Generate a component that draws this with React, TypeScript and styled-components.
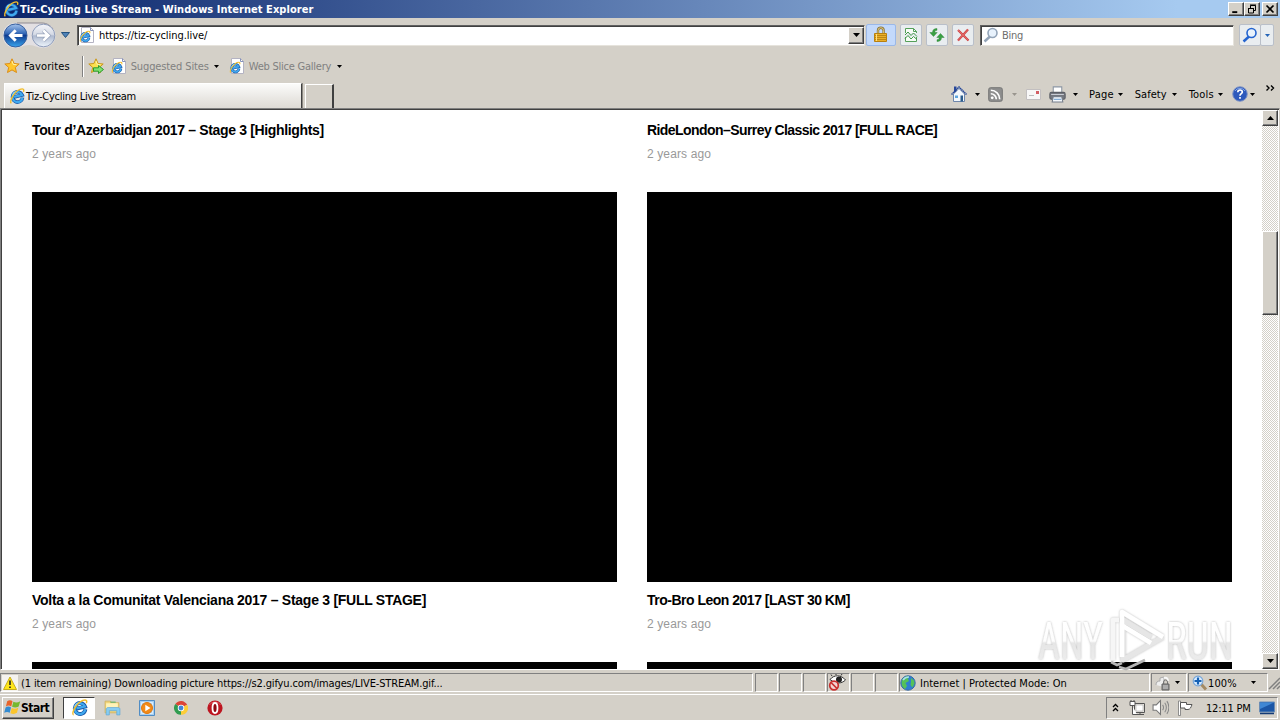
import type { ReactNode } from 'react';
import styled, { createGlobalStyle, css } from 'styled-components';

const GlobalStyle = createGlobalStyle`
  * { box-sizing: border-box; }
  body {
    margin: 0;
    overflow: hidden;
    background: #d4d0c8;
    font-family: "DejaVu Sans Condensed", "DejaVu Sans", sans-serif;
    font-stretch: condensed;
    font-size: 11px;
    color: #000;
  }
  svg { display: block; flex: none; }
`;

const raised = css`
  background: #d4d0c8;
  border: 1px solid;
  border-color: #fff #404040 #404040 #fff;
  box-shadow: inset -1px -1px 0 #808080;
`;

const sunken = css`
  border: 1px solid;
  border-color: #808080 #fff #fff #808080;
`;

const Screen = styled.div`
  width: 1280px;
  height: 720px;
  display: flex;
  flex-direction: column;
  overflow: hidden;
`;

const Label = styled.span<{ $ls?: number; $ml?: number; $color?: string }>`
  white-space: pre;
  line-height: 14px;
  margin-top: 2px;
  letter-spacing: ${p => p.$ls ?? -0.3}px;
  margin-left: ${p => p.$ml ?? 0}px;
  color: ${p => p.$color ?? '#000'};
`;

const Slot = styled.span<{ $ml?: number; $mt?: number }>`
  flex: none;
  display: block;
  margin-left: ${p => p.$ml ?? 0}px;
  margin-top: ${p => p.$mt ?? 0}px;
`;

const TitleBar = styled.div`
  height: 18px;
  flex: none;
  display: flex;
  align-items: center;
  padding: 0 2px 0 3px;
  background: linear-gradient(90deg, #0a246a, #a6caf0 92%);
`;

const TitleText = styled.span`
  flex: 1;
  margin-left: 1px;
  color: #fff;
  font-weight: bold;
  letter-spacing: 0.04px;
  white-space: pre;
`;

const WindowButton = styled.div<{ $ml?: number }>`
  ${raised}
  width: 16px;
  height: 14px;
  margin-left: ${p => p.$ml ?? 0}px;
  display: flex;
  align-items: center;
  justify-content: center;
`;

const AddressRow = styled.div`
  height: 34px;
  flex: none;
  display: flex;
  align-items: center;
  padding-left: 3px;
`;

const Field = styled.div<{ $w: number; $ml: number }>`
  width: ${p => p.$w}px;
  height: 21px;
  margin-left: ${p => p.$ml}px;
  display: flex;
  align-items: center;
  background: #fff;
  border: 1px solid;
  border-color: #606060 #e6e3dc #e6e3dc #606060;
  box-shadow: inset 1px 1px 0 #404040;
  padding-left: 1px;
`;

const ComboButton = styled.div`
  ${raised}
  width: 16px;
  height: 17px;
  margin-left: auto;
  display: flex;
  align-items: center;
  justify-content: center;
`;

const ToolButton = styled.div<{ $w?: number; $ml?: number; $active?: boolean }>`
  width: ${p => p.$w ?? 22}px;
  height: 22px;
  margin-left: ${p => p.$ml ?? 4}px;
  display: flex;
  align-items: center;
  justify-content: center;
  border: 1px solid ${p => (p.$active ? '#9ab8e8' : '#b9bfc9')};
  border-radius: 2px;
  background: ${p => (p.$active ? '#c3d9fb' : '#e9edf0')};
`;

const FavoritesRow = styled.div`
  height: 28px;
  flex: none;
  display: flex;
  align-items: center;
  padding-left: 4px;
`;

const Divider = styled.div`
  width: 2px;
  height: 21px;
  margin-left: 12px;
  border-left: 1px solid #808080;
  border-right: 1px solid #fff;
`;

const TabRow = styled.div`
  height: 28px;
  flex: none;
  display: flex;
  align-items: center;
  padding-left: 4px;
`;

const Tab = styled.div`
  width: 298px;
  height: 25px;
  margin-top: 3px;
  display: flex;
  align-items: center;
  padding-left: 4px;
  background: linear-gradient(#fbfbfa, #e9e7e3 60%, #dedbd5);
  border-top: 1px solid #fff;
  border-left: 1px solid #fff;
  border-right: 1px solid #404040;
  box-shadow: 1px 0 0 #8a8781;
`;

const NewTab = styled.div`
  width: 29px;
  height: 24px;
  margin: 4px 0 0 3px;
  border-top: 1px solid #fff;
  border-left: 1px solid #fff;
  border-right: 2px solid #404040;
`;

const Commands = styled.div`
  flex: 1;
  height: 28px;
  display: flex;
  align-items: center;
  margin-left: 617px;
`;

const Viewport = styled.div`
  height: 562px;
  flex: none;
  display: flex;
  background: #fff;
  border: 1px solid;
  border-color: #808080 #d4d0c8 #fff #808080;
  box-shadow: inset 1px 1px 0 #404040;
  position: relative;
`;

const Page = styled.div`
  flex: 1;
  display: grid;
  grid-template-columns: 585px 585px;
  column-gap: 30px;
  align-content: start;
  padding-left: 31px;
  padding-top: 12px;
  overflow: hidden;
  font-family: "Liberation Sans", Arial, sans-serif;
`;

const VideoTitle = styled.h3<{ $ls: number }>`
  margin: 0;
  height: 18px;
  font-size: 14px;
  line-height: 18px;
  font-weight: bold;
  letter-spacing: ${p => p.$ls}px;
  white-space: pre;
`;

const Age = styled.p`
  margin: 6px 0 0;
  height: 18px;
  font-size: 12px;
  line-height: 18px;
  letter-spacing: 0.12px;
  color: #999;
`;

const Thumb = styled.div`
  height: 390px;
  margin: 29px 0 9px;
  background: #000;
`;

const ScrollBar = styled.div`
  width: 16px;
  flex: none;
  margin: 1px 1px 0 0;
  display: flex;
  flex-direction: column;
  background: repeating-conic-gradient(#fff 0 25%, #d4d0c8 0 50%) 0 0 / 2px 2px;
`;

const ScrollButton = styled.div`
  ${raised}
  height: 16px;
  display: flex;
  align-items: center;
  justify-content: center;
`;

const ScrollThumb = styled.div`
  ${raised}
  height: 84px;
  margin: 105px 0 auto;
`;

const Watermark = styled.div`
  position: absolute;
  left: 1034px;
  top: 496px;
`;

const StatusBar = styled.div`
  height: 24px;
  flex: none;
  display: flex;
  align-items: center;
  padding-top: 1px;
`;

const StatusCell = styled.div<{ $w: number; $ml?: number }>`
  ${sunken}
  width: ${p => p.$w}px;
  height: 19px;
  margin-left: ${p => p.$ml ?? 1}px;
  display: flex;
  align-items: center;
  flex: none;
`;

const TaskBar = styled.div`
  flex: 1;
  display: flex;
  align-items: center;
  border-top: 1px solid #fff;
  padding: 0 2px 0 2px;
`;

const StartButton = styled.div`
  ${raised}
  width: 52px;
  height: 22px;
  display: flex;
  align-items: center;
  padding-left: 1px;
  font-size: 12px;
  font-weight: bold;
  letter-spacing: -0.5px;
`;

const ActiveTask = styled.div`
  width: 32px;
  height: 22px;
  margin-left: 9px;
  display: flex;
  align-items: center;
  justify-content: center;
  background: #fff;
  border: 1px solid;
  border-color: #404040 #fff #fff #404040;
`;

const Tray = styled.div`
  ${sunken}
  width: 172px;
  height: 22px;
  margin-left: auto;
  display: flex;
  align-items: center;
  padding-left: 5px;
`;

const Svg = ({ w = 16, h = w, box, children }: { w?: number; h?: number; box?: string; children: ReactNode }) => (
  <svg width={w} height={h} viewBox={box ?? '0 0 16 16'} fill="none">{children}</svg>
);

const Down = ({ w = 5, color = '#000' }: { w?: number; color?: string }) => (
  <svg width={w} height={(w + 1) / 2} viewBox="0 0 10 6" preserveAspectRatio="none">
    <path d="M0 0H10L5 6Z" fill={color} />
  </svg>
);

const IeMark = () => (
  <>
    <g transform="rotate(-14 8 8)">
      <path d="M13 10.900a5 5.200 0 1 1 .3-2.500H5" stroke="#1c5aa8" strokeWidth="3.600" />
      <path d="M12.900 10.800a5 5.100 0 1 1 .2-2.600H5" stroke="#3fa9ef" strokeWidth="2.200" />
      <path d="M4 6.500a4.500 4 0 0 1 5-2.800" stroke="#8cd4fb" strokeWidth="1.200" />
    </g>
    <path d="M2.400 15C-.6 13.800 6.500 1 13.300.9c1.800 0 1.700 1.600 1.100 3" stroke="#f2bd2c" strokeWidth="1.400" />
  </>
);

const IeIcon = ({ size = 16 }: { size?: number }) => <Svg w={size}><IeMark /></Svg>;

const IePage = () => (
  <Svg>
    <path d="M2.500.5h9l3 3v12h-12z" fill="#fff" stroke="#b4b3c2" />
    <path d="M11.500.5v3h3" stroke="#8492bb" />
    <g transform="translate(0 3.500) scale(.74)"><IeMark /></g>
  </Svg>
);

const NavIcon = () => (
  <Svg w={54} h={27} box="0 0 54 27">
    <defs>
      <linearGradient id="back" x2="0" y2="1">
        <stop stopColor="#a6c4ec" /><stop offset=".4" stopColor="#376cba" /><stop offset=".5" stopColor="#0f3c90" /><stop offset="1" stopColor="#39a5ee" />
      </linearGradient>
      <linearGradient id="fwd" x2="0" y2="1">
        <stop stopColor="#f4f5fa" /><stop offset=".45" stopColor="#d5dae5" /><stop offset=".52" stopColor="#aeb9cf" /><stop offset="1" stopColor="#eef5fc" />
      </linearGradient>
    </defs>
    <path d="M12 1h28a12 12 0 0 1 0 25c-6 0-8-3-14-3s-8 3-14 3a12 12 0 0 1 0-25" fill="#e2dfe2" />
    <path d="M14 1h25c5 0 9 3 11 6" stroke="#8e8a92" />
    <circle cx="12.500" cy="13.500" r="11.500" fill="url(#back)" stroke="#37609f" />
    <circle cx="40.500" cy="13.500" r="11.300" fill="url(#fwd)" stroke="#8f9dba" />
    <path d="M19.500 13.500H8M12.700 8.300l-5.200 5.200 5.200 5.200" stroke="#fff" strokeWidth="3" />
    <path d="M33.500 13.500H45M40.300 8.300l5.200 5.200-5.200 5.200" stroke="#97a3ba" strokeWidth="4" />
    <path d="M34 13.500h11M40.300 8.300l5.200 5.200-5.200 5.200" stroke="#fff" strokeWidth="2.600" />
  </Svg>
);

const star = 'M8 .8l2.1 4.7 5.1.5-3.9 3.4 1.2 5.1L8 11.9l-4.5 2.6 1.2-5.1L.8 6l5.1-.5z';

const StarIcon = ({ add }: { add?: boolean }) => (
  <Svg>
    <path d={star} fill={add ? '#fbe04f' : '#ffc62c'} stroke={add ? '#c9971d' : '#dc8d17'} />
    <path d="M8 3l1.200 3.400 3.400.3" stroke="#fff3a5" />
    {add && <path d="M5.500 9.800h5V7.500l5 4-5 4v-2.300h-5z" fill="#7fe070" stroke="#2c9a2d" />}
  </Svg>
);

const LockIcon = () => (
  <Svg w={18} h={18} box="0 0 18 18">
    <path d="M6 8V4.500a2.800 2.800 0 0 1 5.600 0V8" stroke="#8b7439" strokeWidth="2.400" />
    <path d="M6 8V4.500a2.800 2.800 0 0 1 5.600 0V8" stroke="#e5d28a" strokeWidth=".9" />
    <path d="M2.500 7.500h12v8h-12z" fill="#eab02a" stroke="#b8800f" />
    <path d="M3 9.500h11M3 11.500h11M3 13.500h11" stroke="#bd8613" />
    <path d="M4.500 8v7" stroke="#ffe081" />
  </Svg>
);

const CompatIcon = () => (
  <Svg>
    <path d="M2.500 6V1.500h8l3 3V6M2.500 10v4.500h11V10" stroke="#55a05a" fill="#f7fcf7" />
    <path d="M10.500 1.500v3h3" stroke="#55a05a" />
    <path d="M2 8l3-3 3 3.500L10.500 6 14 9.500M2 11.500l3-3 3 3.500 2.500-2.500 3.500 3" stroke="#3f9846" />
  </Svg>
);

const RefreshIcon = () => (
  <Svg>
    <path d="M8 1.500C5 1.500 3.500 3 3.500 5.500H.8L4.500 9.500 8.200 5.500H5.800C5.800 4 6.500 3.300 8 3.300z" fill="#3aa043" stroke="#1e7c2a" strokeWidth=".4" />
    <path d="M8 14.500c3 0 4.500-1.500 4.500-4h2.700l-3.700-4-3.700 4h2.400c0 1.500-.7 2.200-2.200 2.200z" fill="#3aa043" stroke="#1e7c2a" strokeWidth=".4" />
  </Svg>
);

const StopIcon = () => (
  <Svg>
    <path d="M3 3l10.500 10.500M13 2.500L3 13.500" stroke="#cf4545" strokeWidth="2.200" />
    <path d="M3 3l10.500 10.500M13 2.500L3 13.500" stroke="#eb7777" strokeWidth=".7" />
  </Svg>
);

const SearchIcon = ({ color }: { color: string }) => (
  <Svg>
    <path d="M7 9.500L1.500 14.500" stroke={color} strokeWidth="2.500" />
    <circle cx="9.500" cy="6" r="4.500" fill="#e8f2fc" stroke={color} strokeWidth="1.600" />
  </Svg>
);

const ZoomIcon = () => (
  <Svg>
    <path d="M9 9l5 5.500" stroke="#a48a64" strokeWidth="3" />
    <circle cx="6" cy="6" r="4.800" fill="#d9ecff" stroke="#79a6d8" strokeWidth="1.200" />
    <path d="M2.500 6h7M6 2.500v7" stroke="#1762b5" strokeWidth="2.200" />
  </Svg>
);

const HomeIcon = () => (
  <Svg>
    <path d="M2.500 8v7.500h11V8L8 2.500z" fill="#f3f8fd" stroke="#6e86ab" />
    <path d="M3 .5h2.500V5L3 7z" fill="#27479a" />
    <path d="M.5 8.500L8 1l7.500 7.500" stroke="#24479b" strokeWidth="1.500" strokeDasharray="1.500 .5" />
    <path d="M4 9.500h3v2.500H4z" fill="#5fa7df" /><path d="M9.500 9.500H12v6H9.500z" fill="#2b5c8d" />
  </Svg>
);

const RssIcon = () => (
  <Svg w={15}>
    <rect x=".7" y=".7" width="14.600" height="14.600" rx="2" fill="#8e8e8e" stroke="#737373" />
    <circle cx="4.500" cy="11.500" r="1.500" fill="#fff" />
    <path d="M3 7.200a5.800 5.800 0 0 1 5.800 5.800M3 3.500a9.500 9.500 0 0 1 9.500 9.500" stroke="#fff" strokeWidth="1.700" />
  </Svg>
);

const MailIcon = () => (
  <Svg w={15} h={11} box="0 0 15 11">
    <path d="M.5.5h14v10H.5z" fill="#f8f7f7" stroke="#c2bfc0" />
    <path d="M10 2h3v3h-3z" fill="#d35d63" /><path d="M3 6.500h5" stroke="#bbb" />
  </Svg>
);

const PrinterIcon = () => (
  <Svg w={17}>
    <path d="M4 .8h8V7H4z" fill="#fff" stroke="#8c96a4" />
    <rect x=".8" y="6" width="14.400" height="6.500" rx="1.500" fill="#74777e" stroke="#5c5f66" />
    <path d="M2 8h12" stroke="#c8ccd4" /><path d="M4 10h8l1 5H3z" fill="#f5f9fd" stroke="#777f8b" />
    <path d="M4.500 12.500h7" stroke="#6c9dcc" />
  </Svg>
);

const HelpIcon = () => (
  <Svg>
    <circle cx="8" cy="8" r="7.300" fill="#2d59bc" stroke="#8396c4" />
    <path d="M3 5a6 6 0 0 1 10 0" stroke="#86a9e8" />
    <path d="M5.800 6.300c0-3.300 4.800-2.800 4.500-.2C10.200 7.700 8 7.700 8 9.700M8 11v1.700" stroke="#fff" strokeWidth="1.700" />
  </Svg>
);

const WarnIcon = () => (
  <Svg>
    <path d="M0 0h16v16H0z" fill="#f5f3ef" />
    <path d="M8 2L14.500 14.500h-13z" fill="#ffe619" stroke="#c9ad1c" strokeLinejoin="round" />
    <path d="M8 5.500V10M8 11.500V13" stroke="#222" strokeWidth="1.600" />
  </Svg>
);

const EyeIcon = () => (
  <Svg w={19} h={17} box="0 0 19 17">
    <path d="M2 5.500C6 .5 13 .5 17.500 6c-4 4-10 4-15.500-.5z" fill="#fff" stroke="#333" />
    <circle cx="11" cy="5.500" r="3" fill="#222" />
    <path d="M4 2L3 .5M8 1V0M13 1.500l1-1.500" stroke="#333" />
    <circle cx="6" cy="11.500" r="4.300" fill="#f3d5d5" stroke="#c9302f" strokeWidth="1.700" />
    <path d="M3 8.500l6 6" stroke="#c9302f" strokeWidth="1.700" />
  </Svg>
);

const GlobeIcon = () => (
  <Svg>
    <circle cx="8" cy="8" r="7.200" fill="#2f7fd0" stroke="#3a6aa5" />
    <path d="M3 3.500c2-2 4-2.500 6-2L8 4 9 6 5.500 8 7 11l-2 3C1.500 12 .5 7 3 3.500zM11 3l3 2.500.5 3-2 4-2-2.500.5-3z" fill="#55c258" />
    <path d="M3 5a7 7 0 0 1 6-3" stroke="#a9dfef" strokeWidth="1.500" />
  </Svg>
);

const ShieldLock = () => (
  <Svg>
    <path d="M1 10c0-3 1.500-4 4-4V3l4-1v10" fill="#eee" stroke="#aaa" />
    <path d="M9 3c3-1 4 1 4 3" stroke="#f8f8f8" strokeWidth="2" />
    <path d="M8.500 9V7a2 2 0 0 1 4 0v2" stroke="#777" /><path d="M7 9h7v6H7z" fill="#8d8d8d" stroke="#666" /><path d="M8 11h5M8 13h5" stroke="#ccc" />
  </Svg>
);

const StartFlag = () => (
  <Svg w={17}>
    <path d="M3 2C5 .8 6.500 1 8 2L6.800 7C5 5.800 3.600 6 1.800 7z" fill="#e86329" />
    <path d="M8.800 2.500c2 1 4 1 6.500-.5L13.800 7c-2 1.300-4 1.300-6.200.3z" fill="#76b82f" />
    <path d="M1.500 8C3.300 6.800 5 7 6.600 8L5.400 13C3.500 12 2 12.200.2 13z" fill="#338bd1" />
    <path d="M7.300 8.400c2 1 4 1 6.200-.4l-1.300 5c-2 1.300-4 1.300-6.200.3z" fill="#fbc52c" />
  </Svg>
);

const ExplorerIcon = () => (
  <Svg w={17}>
    <path d="M1 2h5l1 1.500h7V13H1z" fill="#f0d47a" stroke="#cfae58" strokeWidth=".7" />
    <path d="M2 4h11v5H2z" fill="#fff3b8" /><path d="M6 3h5" stroke="#6fb76c" strokeWidth="1.200" />
    <path d="M2 15V9.500c0-1 1-1.500 2-1.500h9c1 0 2 .5 2 1.500V15h-3v-4H5v4z" fill="#86ccf2" stroke="#5ba3d4" strokeWidth=".6" />
  </Svg>
);

const PlayerIcon = () => (
  <Svg>
    <path d="M.5.5h15v15H.5z" fill="#a7cff1" stroke="#518dc4" />
    <path d="M2.500 2.500h11v11h-11z" stroke="#dceefc" />
    <circle cx="8" cy="8" r="5.500" fill="#f28a17" stroke="#e0780d" /><path d="M6.300 4.800v6.400L11.500 8z" fill="#fff" />
  </Svg>
);

const ChromeIcon = () => (
  <Svg w={14}>
    <path d="M8 8L1.500 3.500A8 8 0 0 1 15 4.200z" fill="#dc4436" />
    <path d="M8 8l7-3.800A7.600 7.600 0 0 1 8 15.700z" fill="#fccd37" />
    <path d="M8 8v7.700A7.700 7.700 0 0 1 1.500 3.500z" fill="#319c50" />
    <circle cx="8" cy="8" r="3.700" fill="#fff" /><circle cx="8" cy="8" r="2.800" fill="#4285d6" />
  </Svg>
);

const OperaIcon = () => (
  <Svg>
    <circle cx="8" cy="8" r="7.600" fill="#bd1520" /><path d="M2.500 5a6.500 6.500 0 0 1 11 0" stroke="#e0555d" />
    <ellipse cx="8" cy="8" rx="2.500" ry="5" fill="#8e0710" stroke="#fff" strokeWidth="1.800" />
  </Svg>
);

const NetworkIcon = () => (
  <Svg>
    <path d="M5.500 3.500h10v9h-10z" fill="#e7e5e0" stroke="#555" /><path d="M7 5h7v6H7z" fill="#fff" stroke="#999" strokeWidth=".5" />
    <path d="M7 14.500h8M11 13v1" stroke="#555" /><path d="M1 1.500h5v4H1zM2 1V0M5 1V0M3.500 6v8.500H8" stroke="#555" fill="#fff" />
  </Svg>
);

const SpeakerIcon = () => (
  <Svg w={17}>
    <path d="M1 5.500h3l4-4v13l-4-4H1z" fill="#fff" stroke="#777" />
    <path d="M10 5.500c1 1.500 1 3.500 0 5M12 3.500c2 2.500 2 6.500 0 9M14 2c2.500 3.500 2.500 8.500 0 12" stroke="#888" />
  </Svg>
);

const FlagIcon = () => (
  <Svg>
    <path d="M1.500 1h2v14.500h-2z" fill="#fff" stroke="#777" strokeWidth=".8" />
    <path d="M3.500 2.500h6v2H15c-1 3-2 5-4 5H8v-1.500H3.500z" fill="#fff" stroke="#555" />
  </Svg>
);

const DesktopIcon = () => (
  <Svg w={16} h={14} box="0 0 16 14">
    <path d="M.5 1h15v10H.5z" fill="#1b56a6" stroke="#6a8cb5" />
    <path d="M1 1.500h14L1 8z" fill="#3f87d4" /><path d="M1 12.500h14" stroke="#133a75" strokeWidth="1.500" />
  </Svg>
);

const MarkText = styled.text`
  font-family: Roboto, "Liberation Sans", sans-serif;
  font-size: 51px;
  font-weight: 400;
`;

const AnyRun = () => (
  <svg width="214" height="74" viewBox="0 0 214 74">
    <defs>
      <linearGradient id="wm" gradientUnits="userSpaceOnUse" x1="0" y1="16" x2="0" y2="56">
        <stop stopColor="#fff" /><stop offset=".5" stopColor="#fdfdfd" /><stop offset=".55" stopColor="#e6e6e6" /><stop offset="1" stopColor="#ececec" />
      </linearGradient>
      <filter id="halo" x="-10%" y="-10%" width="120%" height="120%">
        <feDropShadow dx="0" dy="0" stdDeviation="1.300" floodColor="#808080" floodOpacity=".6" />
      </filter>
    </defs>
    <g fill="url(#wm)" filter="url(#halo)">
      <MarkText x="3" y="54" textLength="65" lengthAdjust="spacingAndGlyphs">ANY</MarkText>
      <MarkText x="131" y="54" textLength="67" lengthAdjust="spacingAndGlyphs">RUN</MarkText>
    </g>
    <g fill="none" strokeLinejoin="round" filter="url(#halo)">
      <path d="M84 15h-6v40" stroke="#f6f6f6" strokeWidth="4.500" />
      <path d="M128 32L88 55V15l28 17" stroke="#e6e6e6" strokeWidth="5" />
      <path d="M87 52V7l41 25M88 21l28 17" stroke="#fff" strokeWidth="4.500" />
    </g>
    <path d="M76 57l6 3 5-2M84 62l7 2 19-9" fill="none" stroke="#b5b5b5" strokeWidth="2.800" />
  </svg>
);

const videos = [
  { title: 'Tour d’Azerbaidjan 2017 – Stage 3 [Highlights]', ls: -0.35 },
  { title: 'RideLondon–Surrey Classic 2017 [FULL RACE]', ls: -0.57 },
  { title: 'Volta a la Comunitat Valenciana 2017 – Stage 3 [FULL STAGE]', ls: -0.27 },
  { title: 'Tro-Bro Leon 2017 [LAST 30 KM]', ls: -0.5 },
];

const App = () => {
  return (
    <Screen>
      <GlobalStyle />
      <TitleBar>
        <IeIcon />
        <TitleText>Tiz-Cycling Live Stream - Windows Internet Explorer</TitleText>
        <WindowButton>
          <Svg w={10}><path d="M2 13h8" stroke="#000" strokeWidth="3" /></Svg>
        </WindowButton>
        <WindowButton>
          <Svg w={10} box="0 0 10 10"><path d="M3.500 4V1.500h5v5H6.500M3 1h6M1 4.500h5M1.500 4v5h5V4" stroke="#000" /></Svg>
        </WindowButton>
        <WindowButton $ml={2}>
          <Svg w={10} box="0 0 10 10"><path d="M1.500 1.500l7 7M8.500 1.500l-7 7" stroke="#000" strokeWidth="1.700" /></Svg>
        </WindowButton>
      </TitleBar>

      <AddressRow>
        <NavIcon />
        <Slot $ml={4}><Svg w={9} h={6} box="0 0 9 6"><path d="M.5.5h8l-4 5z" fill="#4e82b8" stroke="#24527f" /></Svg></Slot>
        <Field $w={788} $ml={7}>
          <IePage />
          <Label $ml={4} $ls={-0.05}>https://tiz-cycling.live/</Label>
          <ComboButton><Down w={7} /></ComboButton>
        </Field>
        <ToolButton $w={30} $ml={1} $active><LockIcon /></ToolButton>
        <ToolButton $ml={4}><CompatIcon /></ToolButton>
        <ToolButton><RefreshIcon /></ToolButton>
        <ToolButton><StopIcon /></ToolButton>
        <Field $w={254} $ml={6}>
          <Slot $ml={1}><SearchIcon color="#93a4b8" /></Slot>
          <Label $ml={3} $color="#6d6d6d">Bing</Label>
        </Field>
        <ToolButton $ml={5}><SearchIcon color="#2464cf" /></ToolButton>
        <ToolButton $w={14} $ml={-1}><Down color="#2464b8" /></ToolButton>
      </AddressRow>

      <FavoritesRow>
        <StarIcon />
        <Label $ml={4} $ls={0.12}>Favorites</Label>
        <Divider />
        <Slot $ml={4}><StarIcon add /></Slot>
        <Slot $ml={7}><IePage /></Slot>
        <Label $ml={4} $ls={-0.12} $color="#808080">Suggested Sites</Label>
        <Slot $ml={5}><Down /></Slot>
        <Slot $ml={10}><IePage /></Slot>
        <Label $ml={4} $ls={-0.24} $color="#808080">Web Slice Gallery</Label>
        <Slot $ml={6}><Down /></Slot>
      </FavoritesRow>

      <TabRow>
        <Tab><IeIcon /><Label $ml={1} $ls={-0.25}>Tiz-Cycling Live Stream</Label></Tab>
        <NewTab />
        <Commands>
          <HomeIcon />
          <Slot $ml={8}><Down /></Slot>
          <Slot $ml={8}><RssIcon /></Slot>
          <Slot $ml={9}><Down color="#99958e" /></Slot>
          <Slot $ml={9}><MailIcon /></Slot>
          <Slot $ml={8}><PrinterIcon /></Slot>
          <Slot $ml={7}><Down /></Slot>
          <Label $ml={11} $ls={0.2}>Page</Label>
          <Slot $ml={4}><Down /></Slot>
          <Label $ml={12} $ls={0.05}>Safety</Label>
          <Slot $ml={5}><Down /></Slot>
          <Label $ml={12} $ls={0.2}>Tools</Label>
          <Slot $ml={4}><Down /></Slot>
          <Slot $ml={9}><HelpIcon /></Slot>
          <Slot $ml={2}><Down /></Slot>
          <Slot $ml={11} $mt={-13}><Svg w={9} h={6} box="0 0 9 6"><path d="M.5.5L3 3 .5 5.500M5 .5L7.500 3 5 5.500" stroke="#000" strokeWidth="1.400" /></Svg></Slot>
        </Commands>
      </TabRow>

      <Viewport>
        <Page>
          {videos.map(v => (
            <div key={v.title}>
              <VideoTitle $ls={v.ls}>{v.title}</VideoTitle>
              <Age>2 years ago</Age>
              <Thumb />
            </div>
          ))}
        </Page>
        <ScrollBar>
          <ScrollButton><Svg w={7} h={4} box="0 0 7 4"><path d="M0 4h7L3.500 0z" fill="#000" /></Svg></ScrollButton>
          <ScrollThumb />
          <ScrollButton><Down w={7} /></ScrollButton>
        </ScrollBar>
        <Watermark><AnyRun /></Watermark>
      </Viewport>

      <StatusBar>
        <StatusCell $w={753} $ml={0}>
          <Slot $ml={1}><WarnIcon /></Slot>
          <Label $ml={3} $ls={-0.13}>(1 item remaining) Downloading picture https://s2.gifyu.com/images/LIVE-STREAM.gif...</Label>
        </StatusCell>
        <StatusCell $w={23} $ml={2} />
        <StatusCell $w={23} />
        <StatusCell $w={23} />
        <StatusCell $w={23}><EyeIcon /></StatusCell>
        <StatusCell $w={23} />
        <StatusCell $w={23} />
        <StatusCell $w={251}>
          <Slot><GlobeIcon /></Slot>
          <Label $ml={4} $ls={0}>Internet | Protected Mode: On</Label>
        </StatusCell>
        <StatusCell $w={36}>
          <Slot $ml={3}><ShieldLock /></Slot>
          <Slot $ml={4}><Down /></Slot>
        </StatusCell>
        <StatusCell $w={80}>
          <Slot $ml={3}><ZoomIcon /></Slot>
          <Label $ls={0.1}>100%</Label>
          <Slot $ml={14}><Down /></Slot>
        </StatusCell>
        <Svg w={12} h={14} box="0 0 12 14"><path d="M1 13L12 2M5 13l7-7M9 13l3-3" stroke="#808080" strokeWidth="1.500" /></Svg>
      </StatusBar>

      <TaskBar>
        <StartButton><StartFlag />Start</StartButton>
        <ActiveTask><IeIcon size={17} /></ActiveTask>
        <Slot $ml={9}><ExplorerIcon /></Slot>
        <Slot $ml={18}><PlayerIcon /></Slot>
        <Slot $ml={19}><ChromeIcon /></Slot>
        <Slot $ml={19}><OperaIcon /></Slot>
        <Tray>
          <Svg w={7} h={9} box="0 0 7 9"><path d="M1 4l2.500-2.500L6 4M1 8l2.500-2.500L6 8" stroke="#000" strokeWidth="1.300" /></Svg>
          <Slot $ml={10}><NetworkIcon /></Slot>
          <Slot $ml={7}><SpeakerIcon /></Slot>
          <Slot $ml={8}><FlagIcon /></Slot>
          <Label $ml={13} $ls={-0.2}>12:11 PM</Label>
          <Slot $ml={8}><DesktopIcon /></Slot>
        </Tray>
      </TaskBar>
    </Screen>
  );
};

export default App;
